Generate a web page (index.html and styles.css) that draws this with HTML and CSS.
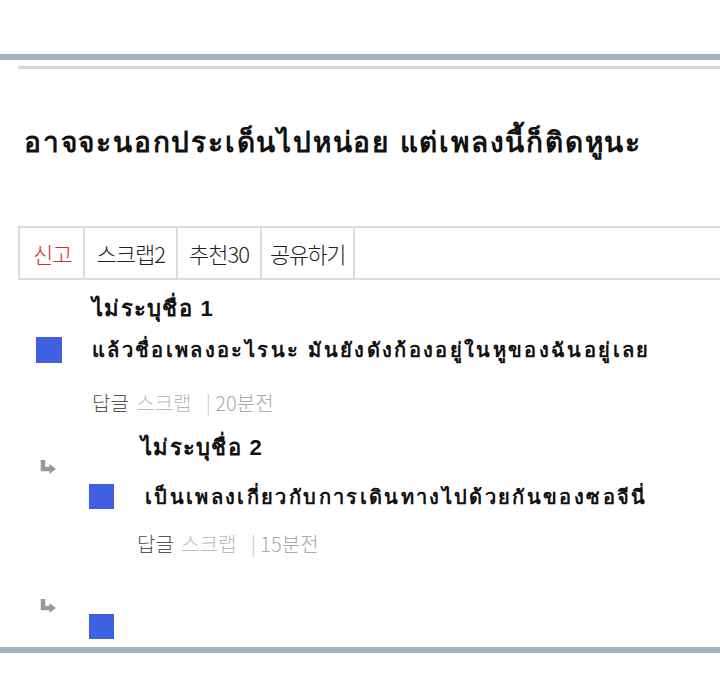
FILE: index.html
```html
<!DOCTYPE html>
<html lang="th">
<head>
    <meta charset="UTF-8">
    <meta name="viewport" content="width=device-width, initial-scale=1.0">
    <title>ความคิดเห็น</title>
    <link rel="stylesheet" href="styles.css">
</head>
<body>
    <div class="top-bar"></div>
    <div class="top-line"></div>

    <h1 class="post-title">อาจจะนอกประเด็นไปหน่อย แต่เพลงนี้ก็ติดหูนะ</h1>

    <div class="actions">
        <span class="action report">신고</span>
        <span class="action">스크랩2</span>
        <span class="action">추천30</span>
        <span class="action share">공유하기</span>
        <span class="action-fill"></span>
    </div>

    <div class="comments">
        <div class="comment">
            <div class="comment-name">ไม่ระบุชื่อ 1</div>
            <div class="comment-body">
                <span class="avatar"></span>
                <p class="comment-text">แล้วชื่อเพลงอะไรนะ มันยังดังก้องอยู่ในหูของฉันอยู่เลย</p>
            </div>
            <div class="comment-meta">
                <span class="reply">답글</span>
                <span class="scrap">스크랩</span>
                <span class="time"><span class="sep">|</span> 20분전</span>
            </div>
        </div>

        <div class="reply-row">
            <span class="reply-arrow">
                <svg width="17" height="15" viewBox="0 0 17 15"><path d="M3 0v9h7" fill="none" stroke="#999" stroke-width="4.5"/><path d="M9.5 4l6.5 5-6.5 5z" fill="#999"/></svg>
            </span>
            <div class="comment">
                <div class="comment-name">ไม่ระบุชื่อ 2</div>
                <div class="comment-body">
                    <span class="avatar"></span>
                    <p class="comment-text">เป็นเพลงเกี่ยวกับการเดินทางไปด้วยกันของซอจีนี่</p>
                </div>
                <div class="comment-meta">
                    <span class="reply">답글</span>
                    <span class="scrap">스크랩</span>
                    <span class="time"><span class="sep">|</span> 15분전</span>
                </div>
            </div>
        </div>

        <div class="reply-row is-last">
            <span class="reply-arrow">
                <svg width="17" height="15" viewBox="0 0 17 15"><path d="M3 0v9h7" fill="none" stroke="#999" stroke-width="4.5"/><path d="M9.5 4l6.5 5-6.5 5z" fill="#999"/></svg>
            </span>
            <div class="comment">
                <div class="comment-body">
                    <span class="avatar"></span>
                </div>
            </div>
        </div>
    </div>

    <div class="bottom-bar"></div>
</body>
</html>
```

FILE: styles.css
```css
body {
    font-family: "Liberation Sans", "Noto Sans", sans-serif;
    margin: 0;
    background: #fff;
    color: #111;
}
.top-bar {
    margin-top: 54px;
    height: 6px;
    background-color: #a4b3c1;
}
.top-line {
    margin: 6px 0 0 18px;
    height: 3px;
    background-color: #d6d6d6;
}
.post-title {
    margin: 54px 0 0 24px;
    font-size: 28px;
    font-weight: bold;
    line-height: 40px;
    letter-spacing: 1.8px;
}

/* action tabs under the post */
.actions {
    display: flex;
    margin: 63px 0 0 18px;
    height: 50px;
    border: 2px solid #dcdcdc;
    border-right: none;
    font-family: "Noto Sans CJK KR", sans-serif;
    font-size: 22px;
    font-weight: 300;
    color: #222;
}
.action {
    display: flex;
    align-items: center;
    padding: 0 11px;
    border-right: 2px solid #dcdcdc;
    letter-spacing: -1px;
}
.action.report {
    color: #d42c2c;
    padding: 0 12px 0 13px;
}
.action.share {
    padding: 0 8px;
    letter-spacing: -1.5px;
}
.action-fill {
    flex: 1;
}

/* comments */
.comments {
    display: flex;
    flex-direction: column;
}
.comment {
    display: flex;
    flex-direction: column;
    padding: 13px 0 0 36px;
}
.comment-name {
    margin-left: 56px;
    font-size: 22px;
    font-weight: bold;
    line-height: 32px;
    letter-spacing: 1.3px;
}
.comment-body {
    display: flex;
    align-items: center;
    margin-top: 12px;
    height: 26px;
}
.avatar {
    flex: none;
    width: 26px;
    height: 26px;
    background-color: #4060e4;
}
.comment-text {
    margin: 0 0 0 30px;
    font-size: 20px;
    font-weight: bold;
    letter-spacing: 2.35px;
    white-space: nowrap;
}
.comment-meta {
    margin: 26px 0 0 56px;
    font-family: "Noto Sans CJK KR", sans-serif;
    font-size: 20px;
    font-weight: 300;
    line-height: 28px;
}
.reply {
    color: #555;
}
.scrap {
    color: #bbb;
    margin-left: 3px;
}
.time {
    color: #aaa;
    margin-left: 10px;
}
.sep {
    color: #c4c4c4;
}

/* replies are indented, with a hook arrow on the left */
.reply-row {
    display: flex;
}
.reply-arrow {
    flex: none;
    width: 49px;
    height: 15px;
    padding-left: 40px;
    margin-top: 43px;
}
.reply-row .comment {
    padding: 15px 0 0 0;
}
.reply-row .comment-name {
    margin-left: 52px;
}
.reply-row .comment-body {
    margin-top: 20px;
    height: 25px;
}
.reply-row .avatar {
    width: 25px;
    height: 25px;
}
.reply-row .comment-text {
    margin-left: 31px;
}
.reply-row .comment-meta {
    margin: 21px 0 0 48px;
}
.reply-row.is-last .reply-arrow {
    margin-top: 41px;
}
.reply-row.is-last .comment-body {
    margin-top: 41px;
}
.bottom-bar {
    margin-top: 8px;
    height: 6px;
    background-color: #a4b3c1;
}
```
